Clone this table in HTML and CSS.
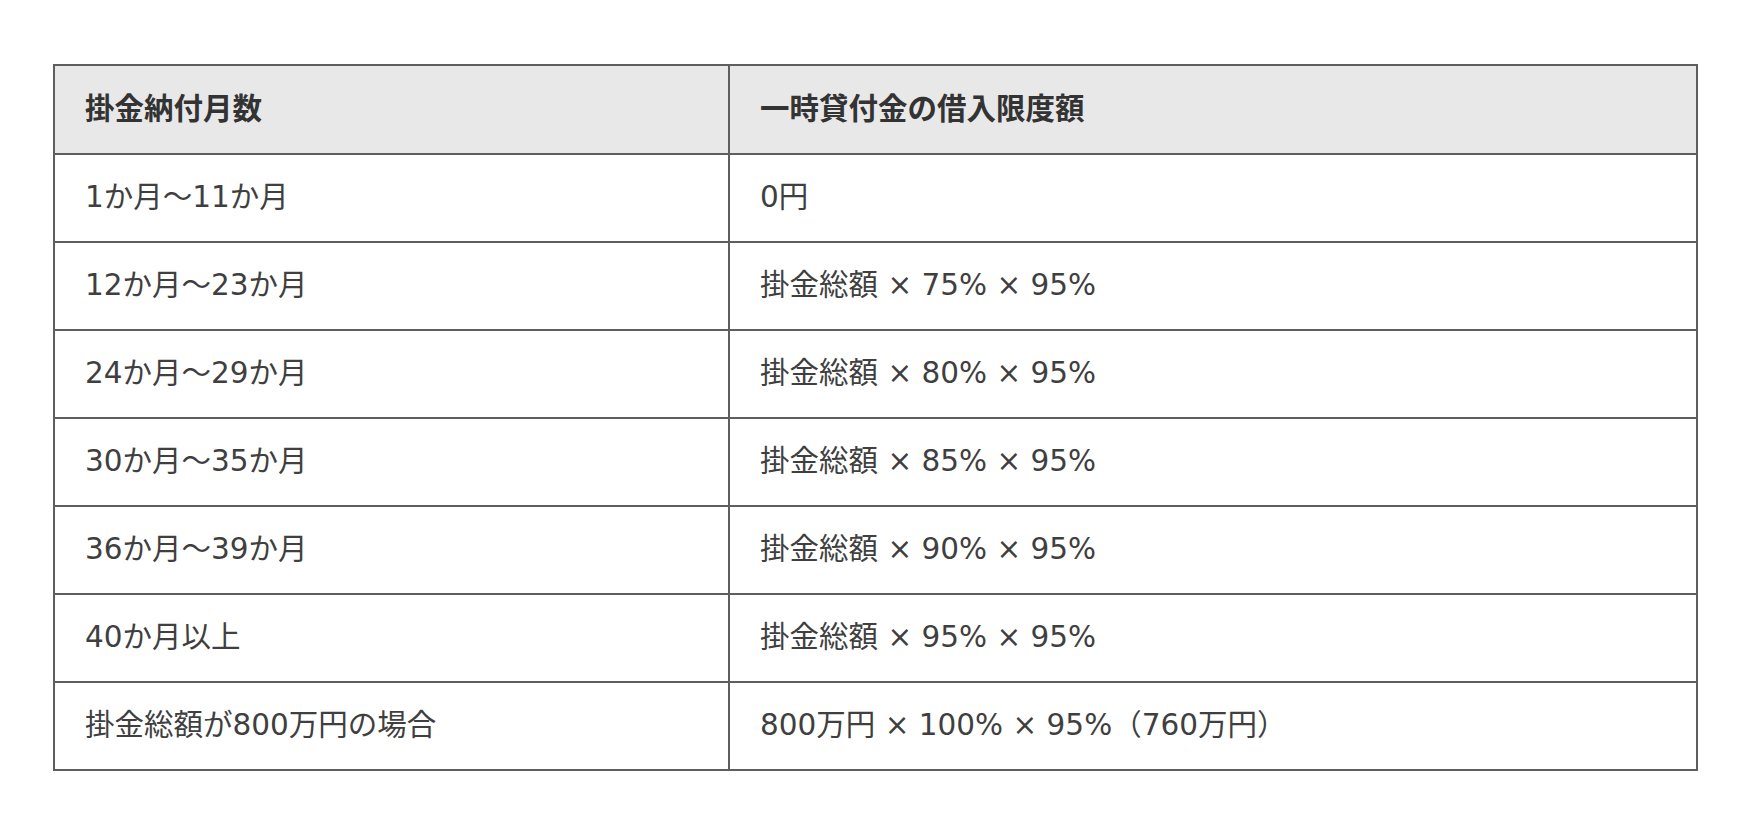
FILE: index.html
```html
<!DOCTYPE html>
<html lang="ja">
<head>
<meta charset="utf-8">
<title>一時貸付金の借入限度額</title>
<link rel="stylesheet" href="styles.css">
</head>
<body>
<div class="page">
  <table class="limit-table">
    <thead>
      <tr>
        <th class="col-months">掛金納付月数</th>
        <th>一時貸付金の借入限度額</th>
      </tr>
    </thead>
    <tbody>
      <tr><td>1か月～11か月</td><td>0円</td></tr>
      <tr><td>12か月～23か月</td><td>掛金総額 × 75% × 95%</td></tr>
      <tr><td>24か月～29か月</td><td>掛金総額 × 80% × 95%</td></tr>
      <tr><td>30か月～35か月</td><td>掛金総額 × 85% × 95%</td></tr>
      <tr><td>36か月～39か月</td><td>掛金総額 × 90% × 95%</td></tr>
      <tr><td>40か月以上</td><td>掛金総額 × 95% × 95%</td></tr>
      <tr><td>掛金総額が800万円の場合</td><td>800万円 × 100% × 95%（760万円）</td></tr>
    </tbody>
  </table>
</div>
</body>
</html>
```

FILE: styles.css
```css
html, body {
  margin: 0;
  padding: 0;
  background: #ffffff;
}

.page {
  padding: 64px 0 0 53px;
  font-family: "DejaVu Sans", "Noto Sans CJK JP", sans-serif;
  color: #3f3f3f;
}

.limit-table {
  width: 1645px;
  border-collapse: collapse;
  table-layout: fixed;
  font-size: 29.5px;
}

.limit-table th,
.limit-table td {
  border: 2px solid #5e5e5e;
  text-align: left;
  vertical-align: middle;
  padding: 0 30px;
  height: 86px;
  line-height: 1.2;
}

.limit-table th {
  background: #e8e8e8;
  font-weight: 700;
  color: #333333;
  height: 87px;
}

.col-months {
  width: 613px;
}
```
